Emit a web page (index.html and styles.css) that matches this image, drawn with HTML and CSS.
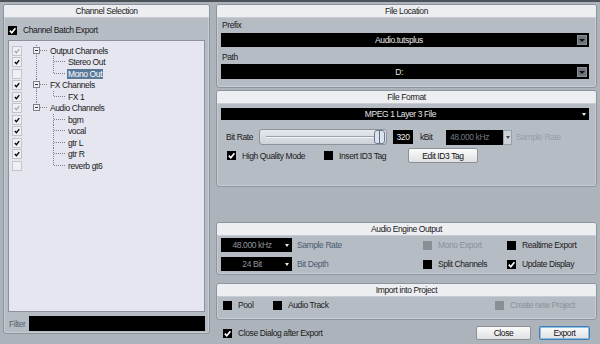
FILE: index.html
```html
<!DOCTYPE html>
<html lang="en">
<head>
    <meta charset="UTF-8">
    <title>Export Audio Mixdown</title>
    <link rel="stylesheet" href="styles.css">
</head>
<body>

    <div class="topbar"></div>

    <div class="dialog">

        <!-- Left: channel tree -->
        <section class="panel side">
            <h2 class="ptitle">Channel Selection</h2>
            <div class="check batch">
                <span class="cb"><svg viewBox="0 0 9 9"><path d="M1.8 4.6L3.8 6.8L7.4 2.2"/></svg></span>
                Channel Batch Export
            </div>

            <div class="tree">
                <div class="node">
                    <span class="tcb part"><svg viewBox="0 0 10 10"><path d="M2.3 5L4.3 7.2L7.8 2.6"/></svg></span>
                    <svg class="br" width="26" height="12"><path class="dot" d="M14.5 0V2.5M14.5 8.5V12M18 5.5H25"/><rect x="11.5" y="2.5" width="6" height="6"/><path class="minus" d="M13 5.5H16"/></svg>
                    <span class="txt">Output Channels</span>
                </div>
                <div class="node">
                    <span class="tcb"><svg viewBox="0 0 10 10"><path d="M2.3 5L4.3 7.2L7.8 2.6"/></svg></span>
                    <svg class="br" width="44" height="12"><path class="dot" d="M14.5 0V12M31.5 0V12M32 5.5H43"/></svg>
                    <span class="txt">Stereo Out</span>
                </div>
                <div class="node">
                    <span class="tcb"></span>
                    <svg class="br" width="44" height="12"><path class="dot" d="M14.5 0V12M31.5 0V5.5M32 5.5H43"/></svg>
                    <span class="txt sel">Mono Out</span>
                </div>
                <div class="node">
                    <span class="tcb"><svg viewBox="0 0 10 10"><path d="M2.3 5L4.3 7.2L7.8 2.6"/></svg></span>
                    <svg class="br" width="26" height="12"><path class="dot" d="M14.5 0V2.5M14.5 8.5V12M18 5.5H25"/><rect x="11.5" y="2.5" width="6" height="6"/><path class="minus" d="M13 5.5H16"/></svg>
                    <span class="txt">FX Channels</span>
                </div>
                <div class="node">
                    <span class="tcb"><svg viewBox="0 0 10 10"><path d="M2.3 5L4.3 7.2L7.8 2.6"/></svg></span>
                    <svg class="br" width="44" height="12"><path class="dot" d="M14.5 0V12M31.5 0V5.5M32 5.5H43"/></svg>
                    <span class="txt">FX 1</span>
                </div>
                <div class="node">
                    <span class="tcb part"><svg viewBox="0 0 10 10"><path d="M2.3 5L4.3 7.2L7.8 2.6"/></svg></span>
                    <svg class="br" width="26" height="12"><path class="dot" d="M14.5 0V2.5M18 5.5H25"/><rect x="11.5" y="2.5" width="6" height="6"/><path class="minus" d="M13 5.5H16"/></svg>
                    <span class="txt">Audio Channels</span>
                </div>
                <div class="node">
                    <span class="tcb"><svg viewBox="0 0 10 10"><path d="M2.3 5L4.3 7.2L7.8 2.6"/></svg></span>
                    <svg class="br" width="44" height="12"><path class="dot" d="M31.5 0V12M32 5.5H43"/></svg>
                    <span class="txt">bgm</span>
                </div>
                <div class="node">
                    <span class="tcb"><svg viewBox="0 0 10 10"><path d="M2.3 5L4.3 7.2L7.8 2.6"/></svg></span>
                    <svg class="br" width="44" height="12"><path class="dot" d="M31.5 0V12M32 5.5H43"/></svg>
                    <span class="txt">vocal</span>
                </div>
                <div class="node">
                    <span class="tcb"><svg viewBox="0 0 10 10"><path d="M2.3 5L4.3 7.2L7.8 2.6"/></svg></span>
                    <svg class="br" width="44" height="12"><path class="dot" d="M31.5 0V12M32 5.5H43"/></svg>
                    <span class="txt">gtr L</span>
                </div>
                <div class="node">
                    <span class="tcb"><svg viewBox="0 0 10 10"><path d="M2.3 5L4.3 7.2L7.8 2.6"/></svg></span>
                    <svg class="br" width="44" height="12"><path class="dot" d="M31.5 0V12M32 5.5H43"/></svg>
                    <span class="txt">gtr R</span>
                </div>
                <div class="node">
                    <span class="tcb"></span>
                    <svg class="br" width="44" height="12"><path class="dot" d="M31.5 0V5.5M32 5.5H43"/></svg>
                    <span class="txt">reverb gt6</span>
                </div>
            </div>

            <div class="filter">
                <span class="flabel">Filter</span>
                <div class="field"></div>
            </div>
        </section>

        <!-- Right: export settings -->
        <div class="main">

            <section class="panel loc">
                <h2 class="ptitle">File Location</h2>
                <div class="lbl first">Prefix</div>
                <div class="combo wide">
                    <span class="val">Audio.tutsplus</span>
                    <span class="abox"></span>
                </div>
                <div class="lbl">Path</div>
                <div class="combo wide tall">
                    <span class="val">D:</span>
                    <span class="abox"></span>
                </div>
            </section>

            <section class="panel fmt">
                <h2 class="ptitle">File Format</h2>
                <div class="combo wide thin">
                    <span class="val">MPEG 1 Layer 3 File</span>
                    <span class="arr"></span>
                </div>
                <div class="bitrow">
                    <span class="brlabel">Bit Rate</span>
                    <div class="slider"><span class="groove"></span><span class="thumb"></span></div>
                    <span class="num">320</span>
                    <span class="unit">kBit</span>
                    <div class="combo srate">
                        <span class="val">48.000 kHz</span>
                        <span class="lbox"></span>
                    </div>
                    <span class="dim">Sample Rate</span>
                </div>
                <div class="optrow">
                    <div class="check">
                        <span class="cb"><svg viewBox="0 0 9 9"><path d="M1.8 4.6L3.8 6.8L7.4 2.2"/></svg></span>
                        High Quality Mode
                    </div>
                    <div class="check"><span class="cb"></span>Insert ID3 Tag</div>
                    <button class="btn id3">Edit ID3 Tag</button>
                </div>
            </section>

            <section class="panel engine">
                <h2 class="ptitle">Audio Engine Output</h2>
                <div class="egrid">
                    <div class="combo small"><span class="val">48.000 kHz</span><span class="arr"></span></div>
                    <span class="blue">Sample Rate</span>
                    <div class="check off"><span class="cb"></span>Mono Export</div>
                    <div class="check"><span class="cb"></span>Realtime Export</div>

                    <div class="combo small"><span class="val">24 Bit</span><span class="arr"></span></div>
                    <span class="blue">Bit Depth</span>
                    <div class="check"><span class="cb"></span>Split Channels</div>
                    <div class="check">
                        <span class="cb"><svg viewBox="0 0 9 9"><path d="M1.8 4.6L3.8 6.8L7.4 2.2"/></svg></span>
                        Update Display
                    </div>
                </div>
            </section>

            <section class="panel import">
                <h2 class="ptitle">Import into Project</h2>
                <div class="igrid">
                    <div class="check"><span class="cb"></span>Pool</div>
                    <div class="check"><span class="cb"></span>Audio Track</div>
                    <div class="check off"><span class="cb"></span>Create new Project</div>
                </div>
            </section>

            <div class="footer">
                <div class="check">
                    <span class="cb"><svg viewBox="0 0 9 9"><path d="M1.8 4.6L3.8 6.8L7.4 2.2"/></svg></span>
                    Close Dialog after Export
                </div>
                <button class="btn close">Close</button>
                <button class="btn export">Export</button>
            </div>

        </div>
    </div>

</body>
</html>
```

FILE: styles.css
```css
* {
    box-sizing: border-box;
}

body, html {
    margin: 0;
    padding: 0;
}

body {
    width: 600px;
    height: 344px;
    overflow: hidden;
    background: #adb3bb;
    color: #1a1a1a;
    font-family: "Liberation Sans", Arial, sans-serif;
    font-size: 8.5px;
    letter-spacing: -0.4px;
}

.topbar {
    height: 2px;
    background: #4c5158;
}

.dialog {
    display: flex;
    gap: 6px;
    padding: 2px 3px 0 3px;
}

/* Panels */
.panel {
    display: flex;
    flex-direction: column;
    background: #b6bcc4;
    border: 1px solid #8f959d;
    border-radius: 3px;
    box-shadow: inset 0 0 0 1px rgba(255, 255, 255, 0.25);
}

.ptitle {
    margin: 0;
    height: 13px;
    line-height: 13px;
    font-size: 8.5px;
    font-weight: normal;
    text-align: center;
    background: #eceef1;
    border-radius: 2px 2px 0 0;
    border-bottom: 1px solid #c9cdd3;
}

/* Checkboxes */
.check {
    display: flex;
    align-items: center;
    gap: 6px;
    white-space: nowrap;
}

.cb {
    display: inline-block;
    flex: none;
    width: 9px;
    height: 9px;
    background: #000;
}

.cb svg {
    display: block;
    width: 9px;
    height: 9px;
}

.cb path {
    fill: none;
    stroke: #fff;
    stroke-width: 1.7;
}

.check.off {
    color: #8b9199;
}

.check.off .cb {
    background: #8a8f96;
}

/* Left panel */
.side {
    width: 207px;
    height: 330px;
}

.batch {
    margin: 7px 0 0 4px;
    height: 10px;
}

.tree {
    margin: 5px 4px 0 4px;
    height: 272px;
    padding: 4px 0 0 3px;
    background: #e5e6ef;
    border: 1px solid #8c929a;
}

.node {
    display: flex;
    align-items: center;
    height: 11.5px;
}

.tcb {
    flex: none;
    width: 10px;
    height: 10px;
    background: #eef0f4;
    border: 1px solid #c0c4cb;
}

.tcb svg {
    display: block;
    width: 8px;
    height: 8px;
}

.tcb path {
    fill: none;
    stroke: #000;
    stroke-width: 1.6;
}

.tcb.part path {
    stroke: #a3a8b0;
}

.br {
    flex: none;
    overflow: visible;
}

.br .dot {
    fill: none;
    stroke: #7d828a;
    stroke-dasharray: 1 1;
}

.br rect {
    fill: #eef0f4;
    stroke: #7d828a;
}

.br .minus {
    stroke: #333;
}

.txt {
    margin-left: 1px;
    padding: 0 1px;
    line-height: 10px;
    white-space: nowrap;
}

.txt.sel {
    background: #5a7898;
    color: #fff;
}

.filter {
    display: flex;
    align-items: center;
    margin: 4px 4px 0 5px;
    height: 15px;
}

.flabel {
    flex: none;
    width: 20px;
    color: #59626d;
}

.field {
    flex: 1;
    height: 15px;
    background: #000;
}

/* Right column */
.main {
    width: 381px;
    display: flex;
    flex-direction: column;
}

.loc {
    height: 84px;
    padding: 0 7px 0 4px;
}

.loc .ptitle {
    margin: 0 -7px 0 -4px;
}

.lbl {
    height: 17px;
    padding: 3px 0 0 1px;
    line-height: 14px;
}

.lbl.first {
    height: 15px;
    padding-top: 0;
    line-height: 15px;
}

/* Combo boxes */
.combo {
    display: flex;
    align-items: center;
    background: #000;
    color: #e6e6e6;
}

.combo .val {
    flex: 1;
    text-align: center;
}

.combo.wide {
    height: 14px;
}

.combo.tall {
    height: 15px;
}

.combo.thin {
    height: 12px;
    margin-top: 4px;
}

.abox {
    position: relative;
    width: 10px;
    height: 10px;
    margin-right: 2px;
    background: #6f747b;
    border: 1px solid #888d94;
}

.abox::after,
.arr::after,
.lbox::after {
    content: "";
    position: absolute;
    left: 50%;
    top: 50%;
    margin: -1px 0 0 -3px;
    border-left: 3px solid transparent;
    border-right: 3px solid transparent;
    border-top: 3px solid #111;
}

.arr {
    position: relative;
    width: 8px;
    height: 8px;
    margin-right: 1px;
}

.arr::after {
    border-top-color: #eee;
    margin: -1px 0 0 -2px;
    border-left-width: 2px;
    border-right-width: 2px;
}

/* File format */
.fmt {
    margin-top: 2px;
    height: 97px;
    padding: 0 7px 0 4px;
}

.fmt .ptitle {
    margin: 0 -7px 0 -4px;
}

.bitrow {
    display: flex;
    align-items: center;
    height: 16px;
    margin-top: 9px;
    padding-left: 5px;
}

.brlabel {
    width: 33px;
}

.slider {
    display: flex;
    align-items: center;
    width: 128px;
    height: 16px;
    padding: 0 1px 0 6px;
    background: linear-gradient(#e6e9ee, #cdd2d9);
    border: 1px solid #8b929c;
    border-radius: 3px;
}

.groove {
    flex: 1;
    height: 2px;
    background: #9aa1aa;
    border-bottom: 1px solid #f2f4f6;
}

.thumb {
    width: 11px;
    height: 14px;
    background: linear-gradient(90deg, #dce3ec 45%, #5f6e80 45% 55%, #dce3ec 55%);
    border: 1px solid #6b7a8e;
    border-radius: 3px;
}

.num {
    width: 20px;
    height: 14px;
    margin-left: 6px;
    line-height: 14px;
    text-align: center;
    background: #000;
    color: #eee;
}

.unit {
    width: 33px;
    padding-left: 7px;
}

.combo.srate {
    width: 66px;
    height: 15px;
    color: #737a83;
}

.combo.srate .val {
    text-align: left;
    padding-left: 4px;
}

.lbox {
    position: relative;
    width: 9px;
    height: 15px;
    background: #ccd1d8;
    border: 1px solid #9aa0a8;
}

.lbox::after {
    border-top-color: #444;
    margin-left: -2px;
    border-left-width: 2px;
    border-right-width: 2px;
}

.dim {
    margin-left: 4px;
    color: #979da6;
}

.optrow {
    display: grid;
    grid-template-columns: 97px 84px 70px;
    align-items: center;
    height: 15px;
    margin-top: 3px;
    padding-left: 6px;
}

/* Buttons */
.btn {
    height: 15px;
    padding: 0;
    font-family: inherit;
    font-size: 8.5px;
    letter-spacing: -0.4px;
    color: #111;
    background: linear-gradient(#fbfbfb, #dfe0e2);
    border: 1px solid #8c9198;
    border-radius: 2px;
}

/* Audio engine */
.engine {
    margin-top: 35px;
    height: 53px;
    padding: 0 4px;
}

.engine .ptitle {
    margin: 0 -4px;
}

.egrid {
    display: grid;
    grid-template-columns: 71px 131px 84px 1fr;
    grid-auto-rows: 14px;
    row-gap: 5px;
    align-items: center;
    margin-top: 2px;
}

.combo.small {
    height: 14px;
    color: #90959c;
}

.blue {
    padding-left: 5px;
    color: #4a5a70;
}

/* Import */
.import {
    margin-top: 8px;
    height: 37px;
    padding: 0 6px;
}

.import .ptitle {
    margin: 0 -6px;
}

.igrid {
    display: grid;
    grid-template-columns: 50px 222px auto;
    align-items: center;
    height: 14px;
    margin-top: 1px;
}

/* Footer */
.footer {
    display: flex;
    align-items: center;
    height: 14px;
    margin-top: 6px;
    padding-left: 7px;
}

.footer .check {
    flex: 1;
}

.btn.close {
    width: 55px;
    height: 14px;
}

.btn.export {
    width: 51px;
    height: 14px;
    margin: 0 7px 0 8px;
    border: 1px solid #3d7fb4;
    box-shadow: inset 0 0 0 1px #8fbde0;
}
```
